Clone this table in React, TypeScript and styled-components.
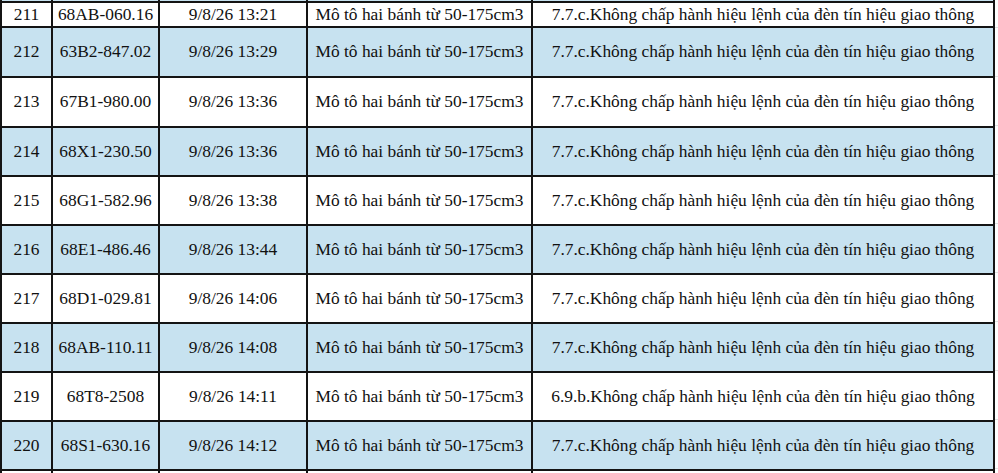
import React from "react";
import styled, { createGlobalStyle } from "styled-components";

const GlobalStyle = createGlobalStyle`
    html, body {
        margin: 0;
        padding: 0;
        background: #ffffff;
        overflow: hidden;
    }
`;

interface Violation {
    no: string;
    plate: string;
    time: string;
    vehicle: string;
    rule: string;
}

const vehicle = "Mô tô hai bánh từ 50-175cm3";
const redLight = "Không chấp hành hiệu lệnh của đèn tín hiệu giao thông";

const rows: Violation[] = [
    { no: "211", plate: "68AB-060.16", time: "9/8/26 13:21", vehicle, rule: `7.7.c.${redLight}` },
    { no: "212", plate: "63B2-847.02", time: "9/8/26 13:29", vehicle, rule: `7.7.c.${redLight}` },
    { no: "213", plate: "67B1-980.00", time: "9/8/26 13:36", vehicle, rule: `7.7.c.${redLight}` },
    { no: "214", plate: "68X1-230.50", time: "9/8/26 13:36", vehicle, rule: `7.7.c.${redLight}` },
    { no: "215", plate: "68G1-582.96", time: "9/8/26 13:38", vehicle, rule: `7.7.c.${redLight}` },
    { no: "216", plate: "68E1-486.46", time: "9/8/26 13:44", vehicle, rule: `7.7.c.${redLight}` },
    { no: "217", plate: "68D1-029.81", time: "9/8/26 14:06", vehicle, rule: `7.7.c.${redLight}` },
    { no: "218", plate: "68AB-110.11", time: "9/8/26 14:08", vehicle, rule: `7.7.c.${redLight}` },
    { no: "219", plate: "68T8-2508", time: "9/8/26 14:11", vehicle, rule: `6.9.b.${redLight}` },
    { no: "220", plate: "68S1-630.16", time: "9/8/26 14:12", vehicle, rule: `7.7.c.${redLight}` },
    { no: "221", plate: "", time: "", vehicle: "", rule: "" },
];

// row heights in px, first one is the tail of row 210 peeking in at the top
const heights = [1, 23, 48, 48, 47, 47, 47, 47, 47, 47, 47, 30];

const App = () => {
    return (
        <>
            <GlobalStyle />
            <Page>
                <Sheet $rows={heights}>
                    <Row>
                        {[0, 1, 2, 3, 4].map((i) => (
                            <Cell key={i} $shaded={true} />
                        ))}
                    </Row>
                    {rows.map((row) => {
                        const shaded = Number(row.no) % 2 === 0;
                        return (
                            <Row key={row.no}>
                                <Cell $shaded={shaded}>{row.plate ? row.no : ""}</Cell>
                                <Cell $shaded={shaded}>{row.plate}</Cell>
                                <Cell $shaded={shaded}>{row.time}</Cell>
                                <Cell $shaded={shaded}>{row.vehicle}</Cell>
                                <Cell $shaded={shaded}>{row.rule}</Cell>
                            </Row>
                        );
                    })}
                </Sheet>
                <Margin />
            </Page>
        </>
    );
};

export default App;

const Page = styled.div`
    display: flex;
    flex-direction: row;
    align-items: flex-start;
    width: 998px;
    height: 473px;
    overflow: hidden;
    background: #ffffff;
`;

interface SheetProps {
    $rows: number[];
}

const Sheet = styled.div<SheetProps>`
    display: grid;
    grid-template-columns: 49px 105px 146px 223px 460px;
    grid-template-rows: ${(props) => props.$rows.map((h) => `${h}px`).join(" ")};
    gap: 2px;
    padding: 0 2px 2px 2px;
    background: #141414;
    flex-shrink: 0;
`;

const Row = styled.div`
    display: contents;
`;

interface CellProps {
    $shaded: boolean;
}

const Cell = styled.div<CellProps>`
    display: flex;
    align-items: center;
    justify-content: center;
    white-space: nowrap;
    overflow: hidden;
    background: ${(props) => (props.$shaded ? "#c7e2f0" : "#ffffff")};
    color: #111111;
    font-family: "Liberation Serif", "Times New Roman", serif;
    font-size: 17.4px;
    line-height: 1;
`;

const Margin = styled.div`
    flex: 1;
    height: 473px;
    background: repeating-linear-gradient(
        to bottom,
        #ffffff 0px,
        #ffffff 27px,
        #e2e2e2 27px,
        #e2e2e2 28px,
        #ffffff 28px,
        #ffffff 49px
    );
`;
